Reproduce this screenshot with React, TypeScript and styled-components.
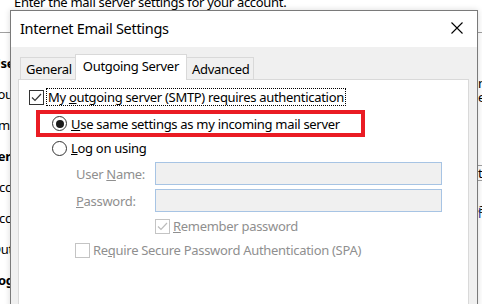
import React from "react";
import styled, { createGlobalStyle, css } from "styled-components";

const GlobalStyle = createGlobalStyle`
  html, body {
    margin: 0;
    padding: 0;
    background: #ffffff;
  }
  body {
    font-family: "Noto Sans", "Open Sans", "DejaVu Sans", sans-serif;
    font-size: 13px;
    letter-spacing: -0.3px;
    color: #000000;
  }
`;

const backLabels = [
  { text: "User Information", bold: true },
  { text: "Your Name:" },
  { text: "Email Address:" },
  { text: "Server Information", bold: true },
  { text: "Account Type:" },
  { text: "Account Server:" },
  { text: "Outgoing mail server (SMTP):" },
  { text: "Logon Information", bold: true },
];

export default function App() {
  return (
    <>
      <GlobalStyle />
      <Page>
        <Backdrop>
          <BackHeading>Enter the mail server settings for your account.</BackHeading>
          <BackRule />
          <BackColumns>
            <BackLeft>
              {backLabels.map((l) => (
                <BackLabel key={l.text} bold={l.bold}>
                  {l.text}
                </BackLabel>
              ))}
            </BackLeft>
            <BackRight>
              <BackLetter top={42}>n</BackLetter>
              <BackLetter top={-2}>e</BackLetter>
              <BackRightRule top={60} />
              <BackLetter top={-1}>t</BackLetter>
              <BackRightRule top={-1} />
              <BackLetter top={19}>a</BackLetter>
              <BackLetter top={-11} blue>
                l
              </BackLetter>
            </BackRight>
          </BackColumns>
        </Backdrop>

        <Dialog>
          <TitleBar>
            <Title>Internet Email Settings</Title>
            <CloseButton aria-label="Close">
              <svg width="12" height="12" viewBox="0 0 12 12">
                <path d="M0.5 0.5 L11.5 11.5 M11.5 0.5 L0.5 11.5" stroke="#000" strokeWidth="1.1" />
              </svg>
            </CloseButton>
          </TitleBar>

          <Body>
            <Tabs>
              <Tab>General</Tab>
              <Tab active>Outgoing Server</Tab>
              <Tab>Advanced</Tab>
            </Tabs>

            <Panel>
              <AuthRow>
                <CheckBox kind="on">
                  <CheckMark color="#333333" />
                </CheckBox>
                <FocusLabel>
                  My <u>o</u>utgoing server (SMTP) requires authentication
                </FocusLabel>
              </AuthRow>

              <Highlight>
                <Radio checked />
                <OptionLabel>
                  <u>U</u>se same settings as my incoming mail server
                </OptionLabel>
              </Highlight>

              <RadioRow>
                <Radio />
                <OptionLabel>
                  <u>L</u>og on using
                </OptionLabel>
              </RadioRow>

              <FieldRow first>
                <FieldLabel>
                  User <u>N</u>ame:
                </FieldLabel>
                <TextInput />
              </FieldRow>
              <FieldRow>
                <FieldLabel>
                  <u>P</u>assword:
                </FieldLabel>
                <TextInput />
              </FieldRow>

              <CheckRow indent={136} gap={6}>
                <CheckBox kind="disabledOn">
                  <CheckMark color="#bcbcbc" />
                </CheckBox>
                <DimLabel>
                  <u>R</u>emember password
                </DimLabel>
              </CheckRow>

              <CheckRow indent={56} gap={8}>
                <CheckBox kind="disabled" />
                <DimLabel>
                  Re<u>q</u>uire Secure Password Authentication (SPA)
                </DimLabel>
              </CheckRow>
            </Panel>
          </Body>
        </Dialog>
      </Page>
    </>
  );
}

const CheckMark = ({ color }: { color: string }) => (
  <svg width="13" height="13" viewBox="0 0 13 13">
    <path d="M2 6.5 L5 9.5 L11 3" fill="none" stroke={color} strokeWidth="1.2" />
  </svg>
);

const Page = styled.div`
  position: relative;
  width: 482px;
  height: 304px;
  overflow: hidden;
  background: #ffffff;
`;

const Backdrop = styled.div`
  display: flex;
  flex-direction: column;
`;

const BackHeading = styled.div`
  margin: -8px 0 0 14px;
  height: 20px;
  line-height: 20px;
  white-space: nowrap;
`;

const BackRule = styled.div`
  margin-top: 20px;
  height: 1px;
  background: #a0a0a0;
`;

const BackColumns = styled.div`
  display: flex;
  justify-content: space-between;
`;

const BackLeft = styled.div`
  display: flex;
  flex-direction: column;
  gap: 11px;
  margin: 20px 0 0 -9px;
`;

const BackLabel = styled.div<{ bold?: boolean }>`
  height: 20px;
  line-height: 20px;
  white-space: nowrap;
  font-weight: ${({ bold }) => (bold ? 700 : 400)};
`;

const BackRight = styled.div`
  width: 4px;
  display: flex;
  flex-direction: column;
`;

const BackLetter = styled.div<{ top: number; blue?: boolean }>`
  margin-top: ${({ top }) => top}px;
  height: 16px;
  line-height: 16px;
  color: ${({ blue }) => (blue ? "#1f3f9f" : "#000")};
`;

const BackRightRule = styled.div<{ top: number }>`
  margin-top: ${({ top }) => top}px;
  height: 1px;
  background: #a0a0a0;
  margin-left: -1px;
`;

const Dialog = styled.div`
  position: absolute;
  left: 10px;
  top: 10px;
  width: 466px;
  height: 300px;
  border: 1px solid #7a7a7a;
  background: #f0f0f0;
  display: flex;
  flex-direction: column;
  box-shadow: 0 0 6px rgba(0, 0, 0, 0.15);
`;

const TitleBar = styled.div`
  height: 36px;
  background: #ffffff;
  display: flex;
  align-items: center;
  justify-content: space-between;
  padding: 0 14px 0 9px;
`;

const Title = styled.div`
  font-size: 14.5px;
  line-height: 20px;
  margin-top: -2px;
`;

const CloseButton = styled.div`
  width: 12px;
  height: 12px;
  display: flex;
  margin-top: -3px;
  svg {
    display: block;
  }
`;

const Body = styled.div`
  flex: 1;
  display: flex;
  flex-direction: column;
  padding: 8px 8px 0 7px;
`;

const Tabs = styled.div`
  display: flex;
  align-items: flex-end;
  padding-left: 2px;
  height: 24px;
  position: relative;
  z-index: 1;
`;

const Tab = styled.div<{ active?: boolean }>`
  height: 21px;
  line-height: 22px;
  padding: 0 4px 0 5px;
  background: #f0f0f0;
  border: 1px solid #d9d9d9;
  border-bottom: none;
  ${({ active }) =>
    active &&
    css`
      height: 25px;
      line-height: 22px;
      padding: 0 7px 0 7px;
      background: #ffffff;
      margin-bottom: -1px;
      margin-left: -2px;
      margin-right: -1px;
    `}
`;

const Panel = styled.div`
  flex: 1;
  background: #ffffff;
  border: 1px solid #d9d9d9;
  display: flex;
  flex-direction: column;
  align-items: flex-start;
`;

const AuthRow = styled.div`
  display: flex;
  align-items: center;
  gap: 3px;
  margin-top: 8px;
  height: 18px;
  padding-left: 10px;
`;

const CheckBox = styled.div<{ kind: "on" | "disabledOn" | "disabled" }>`
  width: 13px;
  height: 13px;
  border: 1px solid ${({ kind }) => (kind === "on" ? "#333333" : "#c4c4c4")};
  background: #ffffff;
  display: flex;
  align-items: center;
  justify-content: center;
  flex-shrink: 0;
`;

const FocusLabel = styled.span`
  line-height: 16px;
  padding: 0 1px;
  outline: 1px dotted #000;
  white-space: nowrap;
`;

const Highlight = styled.div`
  margin: 4px 0 0 17px;
  width: 309px;
  height: 19px;
  border: 4px solid #ea1c24;
  display: flex;
  align-items: center;
  gap: 4px;
  padding-left: 12px;
`;

const Radio = styled.div<{ checked?: boolean }>`
  width: 13px;
  height: 13px;
  border: 1px solid #333333;
  border-radius: 50%;
  background: #ffffff;
  display: flex;
  align-items: center;
  justify-content: center;
  flex-shrink: 0;
  &::after {
    content: "";
    display: ${({ checked }) => (checked ? "block" : "none")};
    width: 8px;
    height: 8px;
    border-radius: 50%;
    background: #1a1a1a;
  }
`;

const OptionLabel = styled.span`
  white-space: nowrap;
  line-height: 18px;
`;

const RadioRow = styled.div`
  height: 22px;
  display: flex;
  align-items: center;
  gap: 4px;
  padding-left: 33px;
`;

const FieldRow = styled.div<{ first?: boolean }>`
  display: flex;
  align-items: center;
  margin-top: ${({ first }) => (first ? 3 : 4)}px;
  padding-left: 57px;
`;

const FieldLabel = styled.span`
  width: 79px;
  color: #8f8f8f;
  white-space: nowrap;
`;

const TextInput = styled.div`
  width: 285px;
  height: 21px;
  border: 1px solid #a7c4e4;
  background: #f0f0f0;
`;

const CheckRow = styled.div<{ indent: number; gap: number }>`
  display: flex;
  align-items: center;
  gap: 3px;
  height: 16px;
  margin-top: ${({ gap }) => gap}px;
  padding-left: ${({ indent }) => indent}px;
`;

const DimLabel = styled.span`
  color: #8f8f8f;
  white-space: nowrap;
  line-height: 16px;
`;
